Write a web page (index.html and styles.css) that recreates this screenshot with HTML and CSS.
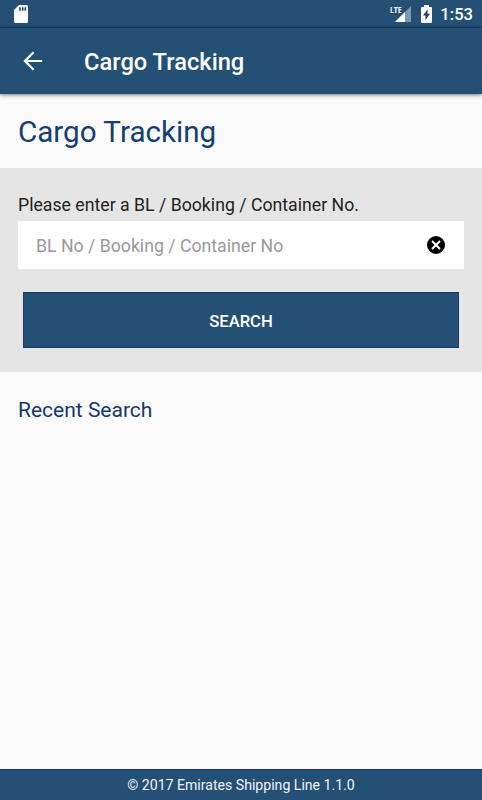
FILE: index.html
```html
<!doctype html>
<html lang="en">
<head>
    <meta charset="UTF-8">
    <meta name="viewport" content="width=device-width, initial-scale=1.0">
    <title>Cargo Tracking</title>
    <link rel="stylesheet" href="styles.css">
</head>
<body>
<div class="app">
    <div class="status">
        <svg class="sd" width="14" height="18" viewBox="0 0 14 18">
            <path fill="#fff" d="M5 0h7.500A1.500 1.500 0 0 1 14 1.500v15a1.500 1.500 0 0 1-1.500 1.500h-11A1.500 1.500 0 0 1 0 16.500V5z"/>
            <path fill="#1c3f6c" d="M5.200 2.200h1.600v3.600H5.200zM7.900 2.200h1.600v3.600H7.900zM10.500 2.200h1.600v3.600h-1.600z"/>
        </svg>
        <div class="signal">
            <svg width="17" height="16" viewBox="0 0 17 16">
                <path fill="#7f99af" d="M17 0v16H1z"/>
                <path fill="#fff" d="M11 6v10H1z"/>
            </svg>
            <span class="lte">LTE</span>
        </div>
        <svg class="battery" width="11" height="18" viewBox="0 0 11 18">
            <path fill="#fff" d="M3 0h5v2H10a1 1 0 0 1 1 1v14a1 1 0 0 1-1 1H1a1 1 0 0 1-1-1V3a1 1 0 0 1 1-1h2z"/>
            <path fill="#1c3f6c" d="M6.500 4.500v4.300h2.500L4.500 15v-4.500H2z"/>
        </svg>
        <span class="time">1:53</span>
    </div>
    <div class="navbar">
        <svg class="back" width="20" height="20" viewBox="0 0 20 20">
            <path fill="none" stroke="#fff" stroke-width="2.200" d="M19.200 10H2.200M10.600 1.300L1.900 10l8.700 8.700"/>
        </svg>
        <span class="navTitle">Cargo Tracking</span>
    </div>
    <h1 class="title">Cargo Tracking</h1>
    <div class="searchBox">
        <label class="label" for="number">Please enter a BL / Booking / Container No.</label>
        <div class="field">
            <input type="text" id="number" class="input" placeholder="BL No / Booking / Container No">
            <svg class="clear" width="18" height="18" viewBox="0 0 18 18">
                <circle cx="9" cy="9" r="9" fill="#000"/>
                <path stroke="#fff" stroke-width="2" d="M5 5l8 8M13 5l-8 8"/>
            </svg>
        </div>
        <button class="btn">SEARCH</button>
    </div>
    <h2 class="recent">Recent Search</h2>
    <div class="footer">© 2017 Emirates Shipping Line 1.1.0</div>
</div>
</body>
</html>
```
FILE: styles.css
```css
* {
    margin:0;
    padding:0;
    box-sizing: border-box;
}
body{
    font-family: Roboto, "Liberation Sans", sans-serif;
    background: #fafafa;
}
.app{
    height:800px;
    display: flex;
    flex-direction: column;
    overflow: hidden;
}
.status{
    height:28px;
    padding:0 9px 0 14px;
    display: flex;
    align-items: center;
    background: #255075;
    color: #fff;
}
.signal{
    position: relative;
    width:17px;
    height:16px;
    margin-left:auto;
}
.signal svg{
    display: block;
}
.lte{
    position: absolute;
    left:-4px;
    top:-2px;
    padding-right:1px;
    font-family: "Open Sans", Roboto, sans-serif;
    font-size:9.5px;
    line-height:11px;
    font-weight: 700;
    background: #255075;
    transform: scaleX(0.72);
    transform-origin: left;
}
.battery{
    margin:0 8px 0 10px;
}
.time{
    padding-top:1px;
    font-size:16.6px;
    font-weight: 500;
    line-height:28px;
}
.navbar{
    height:66px;
    padding:0 23px;
    display: flex;
    align-items: center;
    background: #255075;
    box-shadow: 0 -1px 2px rgba(0,0,0,0.3), 0 1px 4px rgba(0,0,0,0.5);
}
.navTitle{
    margin-left:41px;
    padding-top:1px;
    color: #fff;
    font-size:23.7px;
    font-weight: 500;
}
.title{
    height:74px;
    padding:0 18px;
    color: #134070;
    font-size:29.6px;
    font-weight: 400;
    line-height:77px;
}
.searchBox{
    height:204px;
    padding:24px 18px;
    background: #e5e5e5;
}
.label{
    display: block;
    height:29px;
    color: #222;
    font-size:17.7px;
    line-height:26px;
}
.field{
    height:48px;
    padding:0 19px 0 18px;
    display: flex;
    align-items: center;
    background: #fff;
}
.input{
    flex:1;
    min-width:0;
    height:48px;
    padding-top:2px;
    border:none;
    outline: none;
    background: none;
    font-family: inherit;
    font-size:17.7px;
}
.input::placeholder{
    color: #999;
}
.btn{
    display: block;
    width:436px;
    height:56px;
    margin:23px auto 0;
    padding-top:2px;
    border:1px solid #123d68;
    background: #255075;
    color: #fff;
    font-family: inherit;
    font-size:16.6px;
    font-weight: 500;
}
.recent{
    padding:24px 18px;
    color: #13386d;
    font-size:21px;
    font-weight: 400;
    line-height:28px;
}
.footer{
    height:31px;
    margin-top:auto;
    border-top:1px solid #123d68;
    background: #255075;
    color: #f0f3f6;
    font-size:14.1px;
    line-height:31px;
    text-align: center;
}
```
